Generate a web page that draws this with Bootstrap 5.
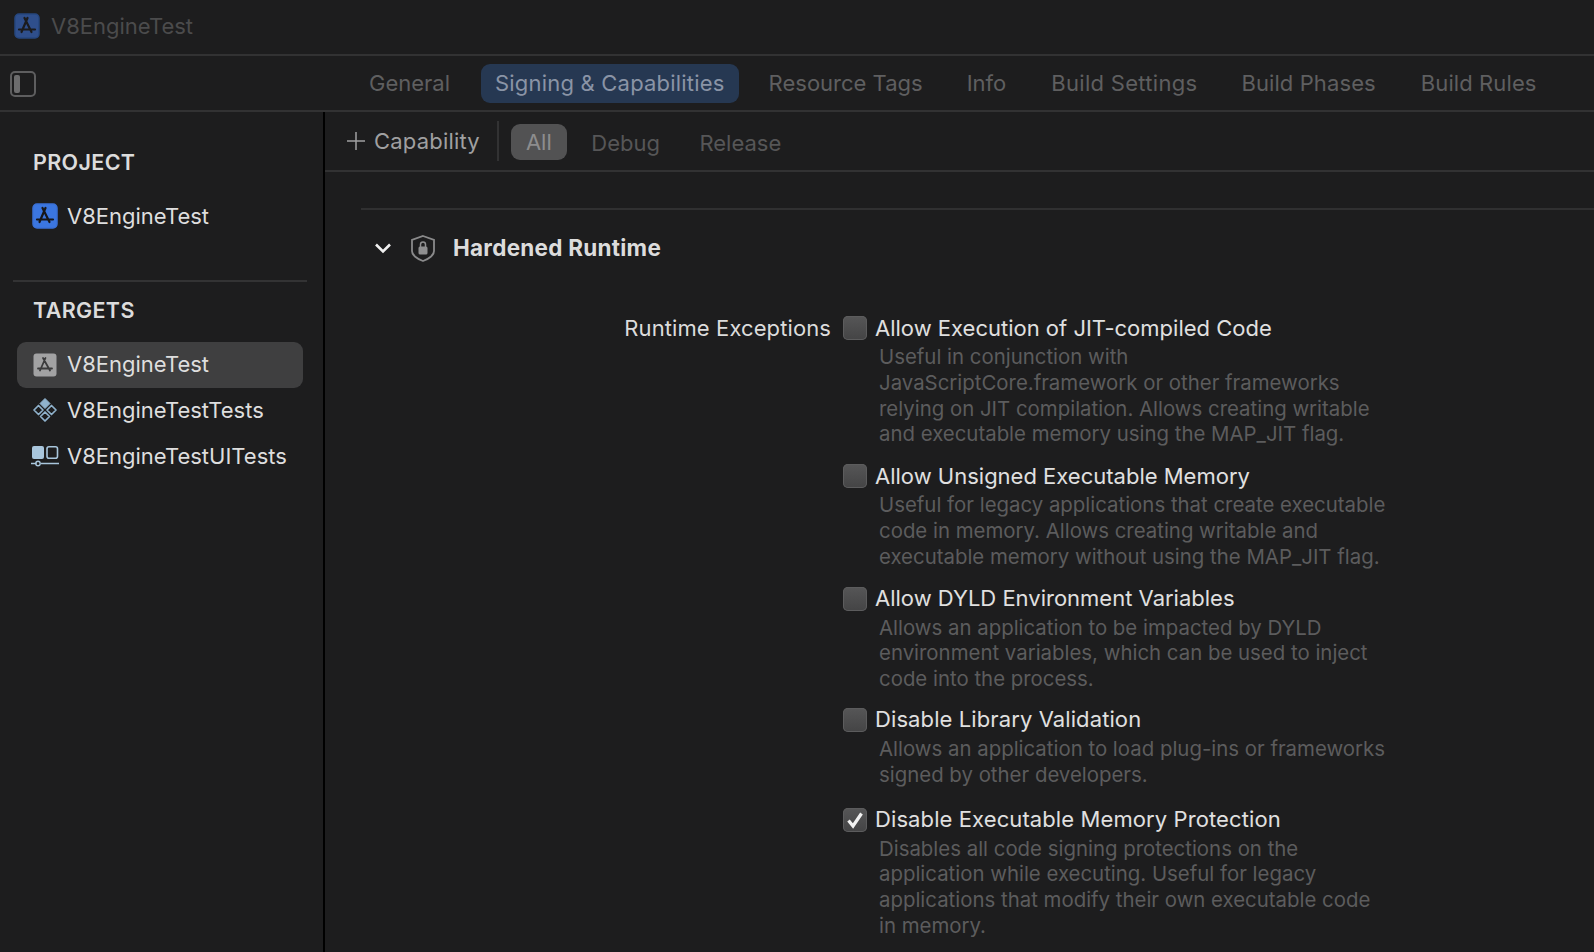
<!DOCTYPE html>
<html lang="en">
<head>
<meta charset="utf-8">
<title>V8EngineTest</title>
<link href="https://cdn.jsdelivr.net/npm/bootstrap@5.3.0/dist/css/bootstrap.min.css" rel="stylesheet">
<style>
html,body{height:100%;margin:0;background:#1d1d1e;overflow:hidden}
body{font-family:Inter,"Liberation Sans",sans-serif;font-size:22px;color:#e0e0e0;width:1594px;height:952px}
svg{display:block;flex:none}
.titlebar{height:54px;padding-left:14px;gap:11px;padding-bottom:2px}
.rule-h{height:2px;background:#323233}
.titletext{color:#4b4b4c;font-size:22px}
.tabbar{height:54px;padding-left:10px}
.tabbar>svg{margin-top:2px}
.tabs{margin-left:319px;gap:16px}
.tabitem{height:39px;padding:0 14px;border-radius:9px;color:#5f5f60;line-height:39px;white-space:nowrap}
.tabitem.on{background:#263852;color:#8a94a6;letter-spacing:.2px}
.tabitem.wide{letter-spacing:.3px}
.tabitem.mid{letter-spacing:.1px;margin-right:1px}
.tabitem.nudge{margin-right:1px}
.mainrow{height:840px}
.side{width:323px;flex:none}
.vline{width:2px;flex:none;background:#000}
.grouphead{font-weight:600;color:#dcdcdc;font-size:21.5px;letter-spacing:.35px;padding-left:33px;line-height:26px}
.siderow{height:46px;gap:8px;padding-left:14px;margin:0 20px 0 17px;border-radius:9px;white-space:nowrap;color:#dedede}
.siderow.sel{background:#3f3f40;margin-top:19px;padding-bottom:1px}
.siderow.sel+.siderow{margin-top:-1px}
.sidesep{height:2px;background:#333334;margin:0 16px 0 13px}
.iconbox{width:28px;display:flex;justify-content:center}
.content{flex:1;min-width:0}
.capbar{height:58px;padding-left:22px}
.capbtn{color:#a0a0a1;gap:9px;white-space:nowrap;letter-spacing:.2px}
.capdiv{width:2px;height:40px;background:#323233;margin:0 12px 0 17px}
.filt{height:36px;line-height:36px;padding:0 15px;border-radius:9px;color:#565657;white-space:nowrap}
.filt.on{background:#525253;color:#8d8d8e;margin-top:2px}
.filt.off{line-height:38px;margin-top:2px;margin-left:9.5px}
.secline{height:2px;background:#303031;margin:36px 0 0 36px}
.secthead{height:76px;padding-left:49px;font-weight:700;font-size:22.5px;letter-spacing:.25px;color:#dcdcdc}
.excrow{padding-top:29px}
.exclabel{width:506px;flex:none;text-align:right;color:#dcdcdc;line-height:26px;white-space:nowrap;letter-spacing:.1px}
.optlist{margin-left:12px}
.opthead{height:26px;gap:8px;white-space:nowrap;color:#e0e0e0}
.opthead.spread{letter-spacing:.1px}
.cbx{width:24px;height:24px;flex:none;border-radius:5px;background:linear-gradient(#565657,#444445);box-shadow:inset 0 0 0 1px #5c5c5d;display:flex;align-items:center;justify-content:center}
.optdesc{margin:3px 0 0 36px;color:#5c5c5d;font-size:20.4px;line-height:25.8px;white-space:nowrap}
.gap1{margin-bottom:16px}
.gap2{margin-bottom:16px}
.gap4{margin-bottom:15px}
.gap3{margin-bottom:19px}
</style>
</head>
<body>
<div class="titlebar d-flex align-items-center">
  <svg width="26" height="26" viewBox="0 0 26 26"><rect x="1" y="1" width="24" height="24" rx="4" fill="#2f4f8c" stroke="#26477f" stroke-width="1.5"/><path d="M13.500 5 L7.500 19 M10.500 5 L17.500 19 M5 16.500h16" stroke="#1b1b1d" stroke-width="2.200" fill="none" stroke-linecap="round"/></svg>
  <span class="titletext">V8EngineTest</span>
</div>
<div class="rule-h"></div>
<div class="tabbar d-flex align-items-center">
  <svg width="26" height="26" viewBox="0 0 26 26"><rect x="1" y="1" width="24" height="24" rx="4" fill="none" stroke="#5e5e5f" stroke-width="2"/><rect x="4" y="4" width="6" height="18" rx="2" fill="#6c6c6d"/></svg>
  <div class="tabs d-flex">
    <div class="tabitem nudge">General</div>
    <div class="tabitem on">Signing &amp; Capabilities</div>
    <div class="tabitem">Resource Tags</div>
    <div class="tabitem nudge">Info</div>
    <div class="tabitem wide">Build Settings</div>
    <div class="tabitem mid">Build Phases</div>
    <div class="tabitem mid">Build Rules</div>
  </div>
</div>
<div class="rule-h"></div>
<div class="mainrow d-flex">
  <aside class="side">
    <div class="grouphead" style="margin-top:37px">PROJECT</div>
    <div class="siderow d-flex align-items-center" style="margin-top:18px">
      <div class="iconbox"><svg width="26" height="26" viewBox="0 0 26 26"><rect x="1" y="1" width="24" height="24" rx="4" fill="#3b76e0" stroke="#3a70d6" stroke-width="1.500"/><path d="M13.500 5 L7.500 19 M10.500 5 L17.500 19 M5 16.500h16" stroke="#17171a" stroke-width="2.200" fill="none" stroke-linecap="round"/></svg></div>
      <span>V8EngineTest</span>
    </div>
    <div class="sidesep" style="margin-top:41px"></div>
    <div class="grouphead" style="margin-top:15px">TARGETS</div>
    <div class="siderow sel d-flex align-items-center">
      <div class="iconbox"><svg width="24" height="24" viewBox="0 0 24 24"><rect width="23" height="23" x=".5" y=".5" rx="3" fill="#a2a2a3"/><path d="M12.500 5 L7 17.500 M10 5 L17 17.500 M5 15.500h14" stroke="#3b3b3c" stroke-width="1.800" fill="none" stroke-linecap="round"/></svg></div>
      <span>V8EngineTest</span>
    </div>
    <div class="siderow d-flex align-items-center">
      <div class="iconbox"><svg width="26" height="26" viewBox="0 0 26 26"><path d="M13 1.500 L18 6.500 L13 11.500 L8 6.500Z" fill="#8fb2cc" stroke="#8fb2cc" stroke-linejoin="round"/><path d="M6.500 8.500 L11 13 L6.500 17.500 L2 13Z M19.500 8.500 L24 13 L19.500 17.500 L15 13Z M13 15 L17.500 19.500 L13 24 L8.500 19.500Z" fill="none" stroke="#8fb2cc" stroke-width="1.700" stroke-linejoin="round"/></svg></div>
      <span>V8EngineTestTests</span>
    </div>
    <div class="siderow d-flex align-items-center">
      <div class="iconbox"><svg width="28" height="22" viewBox="0 0 28 22"><rect x="1" y="1" width="12" height="13" rx="2" fill="#a9c6dc"/><rect x="16" y="1.800" width="10.500" height="11.500" rx="2" fill="none" stroke="#a9c6dc" stroke-width="1.600"/><path d="M0 18.500h5.500M10 18.500h18" stroke="#a9c6dc" stroke-width="1.600"/><circle cx="7" cy="18.500" r="2.200" fill="none" stroke="#a9c6dc" stroke-width="1.400"/></svg></div>
      <span>V8EngineTestUITests</span>
    </div>
  </aside>
  <div class="vline"></div>
  <main class="content">
    <div class="capbar d-flex align-items-center">
      <div class="capbtn d-flex align-items-center">
        <svg width="18" height="18" viewBox="0 0 18 18"><path d="M9 0v18M0 9h18" stroke="#a0a0a1" stroke-width="1.500"/></svg>
        <span>Capability</span>
      </div>
      <div class="capdiv"></div>
      <div class="filt on">All</div>
      <div class="filt off">Debug</div>
      <div class="filt off">Release</div>
    </div>
    <div class="rule-h"></div>
    <div class="secline"></div>
    <div class="secthead d-flex align-items-center">
      <svg width="18" height="12" viewBox="0 0 18 12"><path d="M2 2.500L9 9.500L16 2.500" fill="none" stroke="#f0f0f0" stroke-width="2.600"/></svg>
      <svg style="margin-left:19px" width="24" height="27" viewBox="0 0 24 27"><path d="M12 1L23 5V16C23 20 18 24 12 26C6 24 1 20 1 16V5Z" fill="none" stroke="#8a8a8b" stroke-width="1.800"/><rect x="7.500" y="11.500" width="9" height="8" rx="1.500" fill="#8f8f90"/><path d="M9.500 12V9.500a2.500 2.500 0 0 1 5 0V12" fill="none" stroke="#8f8f90" stroke-width="1.500"/></svg>
      <span style="margin-left:18px">Hardened Runtime</span>
    </div>
    <div class="excrow d-flex">
      <div class="exclabel">Runtime Exceptions</div>
      <div class="optlist">
        <div class="gap1">
          <div class="opthead d-flex align-items-center"><span class="cbx"></span><span>Allow Execution of JIT-compiled Code</span></div>
          <div class="optdesc">Useful in conjunction with<br>JavaScriptCore.framework or other frameworks<br>relying on JIT compilation. Allows creating writable<br>and executable memory using the MAP_JIT flag.</div>
        </div>
        <div class="gap2">
          <div class="opthead d-flex align-items-center"><span class="cbx"></span><span>Allow Unsigned Executable Memory</span></div>
          <div class="optdesc">Useful for legacy applications that create executable<br>code in memory. Allows creating writable and<br>executable memory without using the MAP_JIT flag.</div>
        </div>
        <div class="gap4">
          <div class="opthead d-flex align-items-center"><span class="cbx"></span><span>Allow DYLD Environment Variables</span></div>
          <div class="optdesc">Allows an application to be impacted by DYLD<br>environment variables, which can be used to inject<br>code into the process.</div>
        </div>
        <div class="gap3">
          <div class="opthead spread d-flex align-items-center"><span class="cbx"></span><span>Disable Library Validation</span></div>
          <div class="optdesc">Allows an application to load plug-ins or frameworks<br>signed by other developers.</div>
        </div>
        <div>
          <div class="opthead spread d-flex align-items-center"><span class="cbx"><svg width="18" height="18" viewBox="0 0 18 18"><path d="M2.500 9.500L7 15L15.500 2.500" fill="none" stroke="#f2f2f2" stroke-width="3.200"/></svg></span><span>Disable Executable Memory Protection</span></div>
          <div class="optdesc">Disables all code signing protections on the<br>application while executing. Useful for legacy<br>applications that modify their own executable code<br>in memory.</div>
        </div>
      </div>
    </div>
  </main>
</div>
</body>
</html>
